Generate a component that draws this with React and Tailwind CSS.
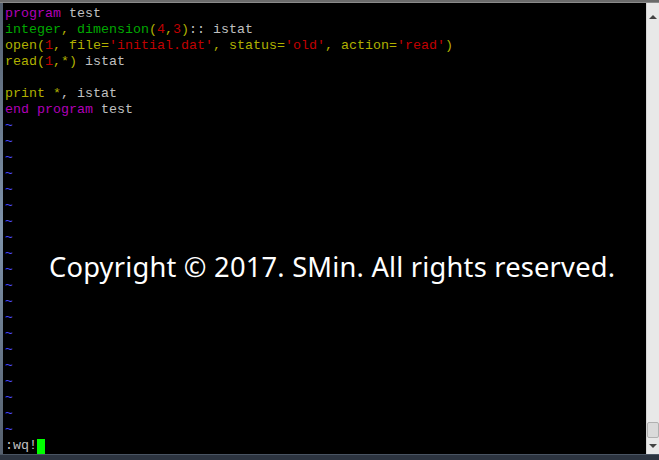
import React from 'react'

const P = 'text-[#b000b8]'
const G = 'text-[#00a800]'
const Y = 'text-[#b0b000]'
const R = 'text-[#c00000]'
const W = 'text-[#c0c0c0]'

const lines = [
  [[P, 'program'], [W, ' test']],
  [[G, 'integer'], [Y, ','], [W, ' '], [G, 'dimension'], [Y, '('], [R, '4'], [Y, ','], [R, '3'], [Y, ')'], [W, ':: istat']],
  [[Y, 'open('], [R, '1'], [Y, ','], [W, ' '], [Y, 'file='], [R, "'initial.dat'"], [Y, ','], [W, ' '], [Y, 'status='], [R, "'old'"], [Y, ','], [W, ' '], [Y, 'action='], [R, "'read'"], [Y, ')']],
  [[Y, 'read('], [R, '1'], [Y, ',*)'], [W, ' istat']],
  [],
  [[Y, 'print'], [W, ' '], [Y, '*'], [W, ', istat']],
  [[P, 'end program'], [W, ' test']],
]

export default function App() {
  const tildes = Array.from({ length: 20 })

  return (
    <div className="w-[659px] h-[460px] flex flex-col bg-[#1b1b1b] overflow-hidden">
      <div className="h-[3px] bg-[#6a6a6a] border-b border-[#8a8a8a]" />
      <div className="flex flex-1 min-h-0">
        <div className="w-[3px] bg-gradient-to-b from-[#55606e] via-[#7f93ab] to-[#55606e]" />
        <div className="relative flex-1 bg-black pl-[2px] pt-[3px] font-['Liberation_Mono',monospace] text-[13.33px] leading-4 whitespace-pre">
          {lines.map((line, i) => (
            <div key={i} className="h-4">
              {line.length === 0 ? ' ' : line.map(([c, t], j) => <span key={j} className={c}>{t}</span>)}
            </div>
          ))}
          {tildes.map((_, i) => (
            <div key={'t' + i} className="h-4 text-[#4a4aff]">~</div>
          ))}
          <div className="h-4 flex items-center text-[#c0c0c0]">
            <span>:wq!</span>
            <span className="w-2 h-[15px] bg-[#00ff00]" />
          </div>

          <div className="absolute left-[46px] top-[250px] text-white text-[27.3px] font-['Noto_Sans',sans-serif] leading-none tracking-[0.2px]">
            Copyright © 2017. SMin. All rights reserved.
          </div>
        </div>
        <div className="w-[13px] bg-[#e8e8e8] border-l border-[#d4d4d4] flex flex-col items-center">
          <div className="h-4 flex items-end justify-center">
            <span className="w-0 h-0 border-l-[4px] border-r-[4px] border-b-[4px] border-l-transparent border-r-transparent border-b-[#444]" />
          </div>
          <div className="flex-1" />
          <div className="w-full h-[16px] bg-[#dadada] border border-[#b0b0b0] rounded-[2px]" />
          <div className="h-[16px] flex items-center justify-center">
            <span className="w-0 h-0 border-l-[4px] border-r-[4px] border-t-[4px] border-l-transparent border-r-transparent border-t-[#444]" />
          </div>
        </div>
      </div>
      <div className="h-[6px] bg-[#2c3440] border-t border-[#4a5563]" />
    </div>
  )
}
